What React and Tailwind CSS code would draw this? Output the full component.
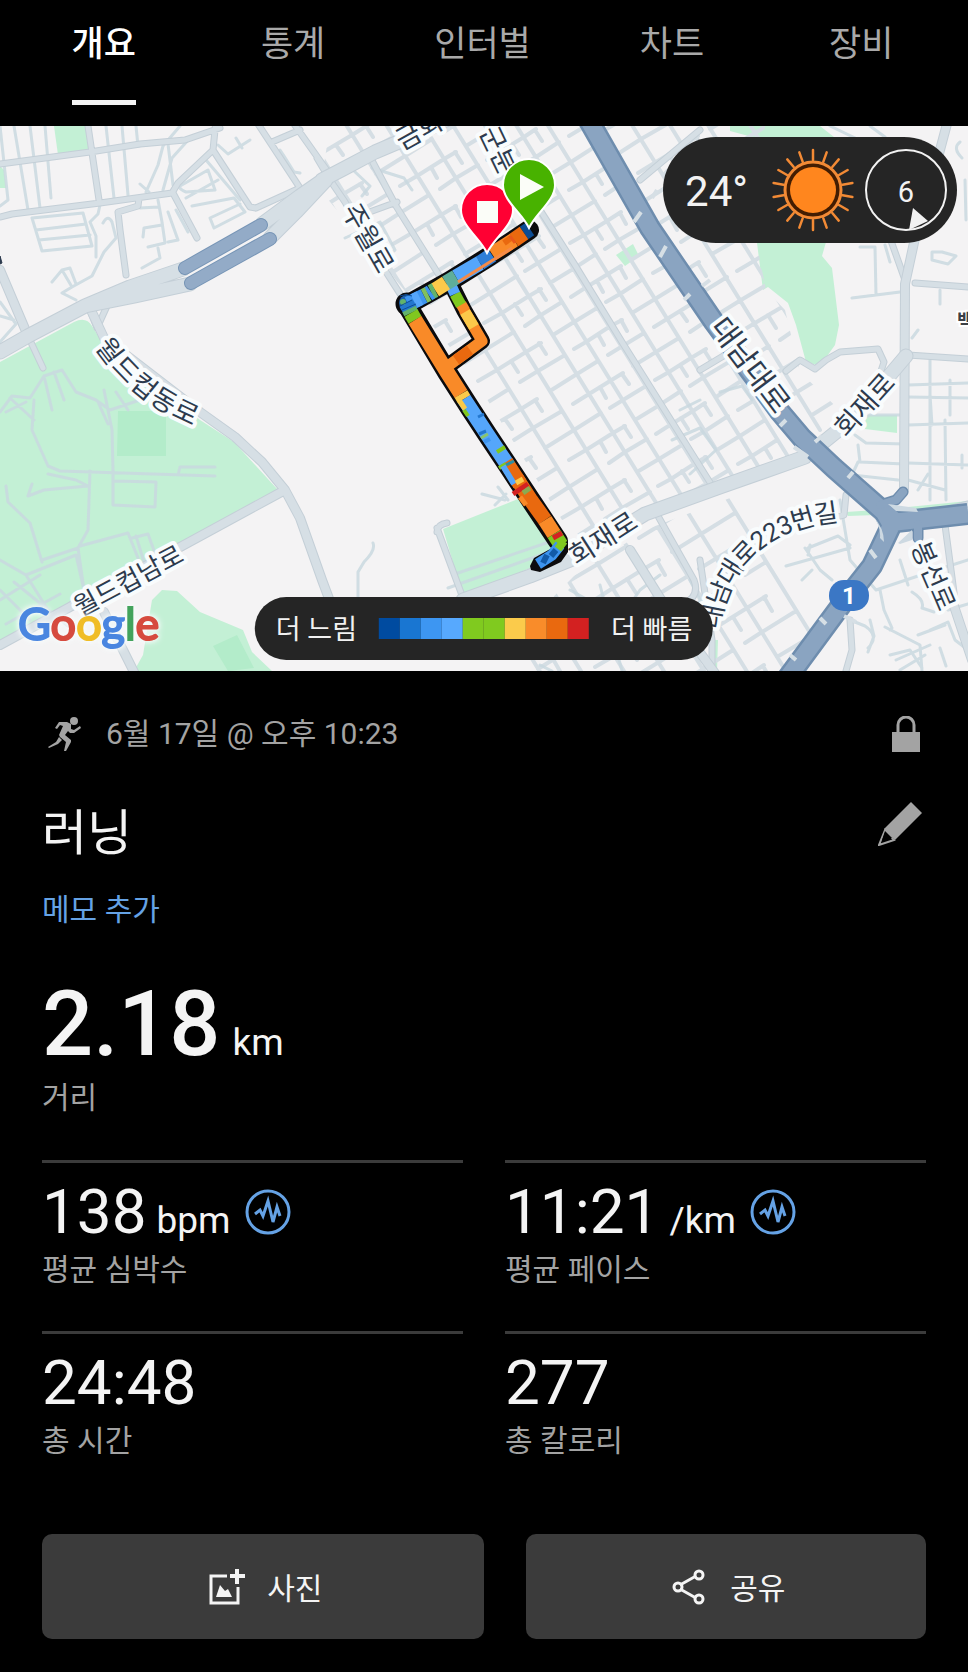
import React from "react";

const FONT = "font-['Roboto','Noto_Sans_CJK_KR',sans-serif]";

/* ---------- map geometry ---------- */

const ORIGIN = [540, 215];
const ALONG = [0.525, 0.851];
const ACROSS = [0.851, -0.525];

const at = (t, n) => [
  Math.round(ORIGIN[0] + t * ALONG[0] + n * ACROSS[0]),
  Math.round(ORIGIN[1] + t * ALONG[1] + n * ACROSS[1]),
];
const seg = (t1, n1, t2, n2) => {
  const [x1, y1] = at(t1, n1);
  const [x2, y2] = at(t2, n2);
  return `M${x1} ${y1}L${x2} ${y2}`;
};

function streets(avenues, tFrom, tTo, pitch) {
  const out = [];
  avenues.forEach((n) => out.push(seg(tFrom, n, tTo, n)));
  let row = 0;
  for (let t = tFrom; t < tTo; t += pitch) {
    for (let k = 0; k < avenues.length - 1; k++) {
      const a = avenues[k];
      const b = avenues[k + 1];
      const kind = (row * 5 + k * 3) % 7;
      if (kind < 4) out.push(seg(t, a, t, b));
      else if (kind === 4) out.push(seg(t, a, t, a + (b - a) * 0.55));
      else out.push(seg(t, b, t, b - (b - a) * 0.6));
      if (kind % 3 === 1) {
        const m = a + (b - a) * 0.5;
        out.push(seg(t, m, t + pitch * 0.55, m));
      }
    }
    row += 1;
  }
  return out.join("");
}

const ZONE_WEST = "M320 190L330 126L590 126L700 320L780 430L806 458L720 488L645 515L590 545L562 520L470 372L400 285Z";
const ZONE_EAST = "M604 126L765 126L757 245L766 290L785 310L800 372L850 420L812 440L712 318Z";
const ZONE_SOUTH = "M575 575L650 528L810 468L866 515L880 535L835 600L780 671L480 671Z";

const WEST_STREETS = streets([-190, -155, -118, -84, -52, -27, 0, 27, 54, 84], -190, 420, 23);
const EAST_STREETS = streets([92, 126, 158, 190, 226, 262], -200, 330, 27);
const SOUTH_STREETS = streets([-240, -205, -168, -134, -100, -64, -30, 10], 240, 560, 29);

const WIDE_ROADS = [
  "M0 352L28 336L85 306L130 287L183 269",
  "M85 306L135 296L190 284",
  "M262 224L300 196L326 178",
  "M270 238L296 212L326 180",
  "M322 180L345 168L375 152L420 133L470 108",
  "M463 600L530 576L570 560L645 514L720 487L805 457",
  "M820 445L846 424L884 382L906 356",
];
const MID_ROADS = [
  "M948 120L932 180L915 238L905 284L904 490",
  "M952 600L972 660",
  "M0 645L285 490",
  "M90 308L104 338L200 412L235 437L262 462L285 490L300 518L322 580L334 612",
  "M104 612L136 676",
  "M0 270L28 336",
  "M630 550L660 598L720 680",
];
const SMALL_ROADS = [
  "M0 217L12 214L100 203L172 193L178 183L213 150L216 120",
  "M213 150L250 207L256 208",
  "M256 208L300 188",
  "M0 164L90 152L140 144L185 140L220 128",
  "M88 126L99 200",
  "M258 124L300 188",
  "M294 124L328 172",
  "M272 142L300 130",
  "M173 193L197 238",
  "M139 198L138 206L118 212L120 230L126 275",
  "M317 158L330 180L345 202L372 250L404 300",
  "M28 336L43 368",
  "M368 153L396 206L452 296",
  "M540 210L575 265L622 342L716 492",
  "M364 214L397 202",
  "M915 283L968 287M908 355L968 359",
  "M786 371L800 360L815 369L826 360L840 352L878 349L884 362L880 374",
  "M890 238L905 280",
  "M437 528L463 598M437 532Q438 524 447 523",
  "M658 516L694 580Q700 596 684 604L664 620",
  "M700 560L712 640L712 671",
  "M850 620L852 650L846 671M905 520L968 504",
  "M832 518L844 515L846 495M945 525L955 600",
  "M90 310L97 328L107 306",
  "M640 180L700 130M700 370L730 352",
];
const LANES = [
  "M0 126L8 200L0 206M14 126L28 210M30 126L40 208M45 126L51 198M106 126L114 198M122 126L128 195M136 126L138 146L190 139",
  "M180 126L163 146L158 165L146 192M168 144L173 185M140 184L149 192M220 127L190 138L172 158L163 190",
  "M32 218L83 213L92 246L42 251L32 218M36 230L86 224M39 240L90 235",
  "M100 205L98 214L90 222L96 236L96 257M103 223Q108 214 112 222L116 238L104 252L92 276L72 287L62 270L52 282M62 270L70 268L76 284",
  "M72 287L62 293L76 300M158 200L162 222L165 243L148 247M162 225L144 228L143 237M158 248L160 258L142 268M140 208L158 207",
  "M180 186L208 170L215 190L186 192Q176 188 180 182M186 198L218 180M192 206L234 198L245 212L214 228L210 218L240 204M206 160L240 200M168 212L178 240L168 242M176 210L188 232",
  "M218 145L228 154L250 140M236 138L242 148M275 152L292 176M280 150L284 156L294 172L300 173",
  "M0 302L16 324L0 342M0 316L14 320",
  "M0 412L12 396L30 398L44 376L62 370L76 392L96 400L110 410L140 400M44 376L52 410M54 372L64 400M34 400L32 430L48 466L60 471L215 476M104 390L112 430L113 470M113 470L113 505L155 507L156 482L114 481M90 471L88 530L78 548L42 560M48 474L76 480L88 486L44 490L28 496L32 484M178 475L180 467L215 467",
  "M6 486L8 502L30 523L42 562M80 546L128 533L138 558M132 538L148 534L156 556M136 536L144 562M0 560L26 575L48 610M26 575L76 555L84 590L60 612M14 582L68 626M0 590L30 620M6 624L60 594M20 634L72 604M0 600L40 575M78 548L84 590",
  "M6 412L26 402M98 402L108 424M116 392L128 410M10 398L34 420",
  "M373 543Q376 550 364 562L358 572L358 597M455 574L555 540M448 588L560 548M482 494L505 500M495 505L506 494M498 487L508 500",
  "M353 170L370 186L362 196M372 168L404 178L412 190M345 238L380 222L395 250L380 262",
  "M908 385L968 383M908 397L968 398M930 360L930 500M930 395L932 425M950 380L950 415M908 425L968 423M908 463L968 465M908 480L945 490M945 420L946 500M962 455L962 468M918 490L928 474",
  "M855 435L866 443L905 444M858 445L860 462L904 464M858 462L852 475L898 480M860 420L870 415L900 415",
  "M830 126L880 150L918 140M870 126L885 137M960 142Q952 148 962 158M965 180L966 220M860 247L875 247L876 295M852 298L900 292M942 252L956 256L948 264L932 260L932 252L942 252M885 245L890 262M940 290L940 304M918 330L912 338",
  "M840 500L850 560L876 590L930 572L968 560M808 548L838 536L850 545M805 548L820 570L832 580M786 566L850 548M802 580L812 570M810 545L808 555M900 560L908 585M880 590L884 610L892 628L890 630M885 627L920 645L922 671",
  "M870 620L874 636L868 652M850 620L865 626Q880 636 868 648M912 592Q925 600 922 608L934 612M930 630L948 622L955 640L968 650M918 635L945 625M890 655L910 650L922 668M896 660L930 645M900 670L925 655M940 648L946 666M948 610L968 604",
  "M672 440L700 428L716 450L690 474M720 392L742 386L752 400M680 410L700 400",
  "M660 575L640 590L625 612M690 580L700 600L688 630M600 585L622 671M570 590L588 600M540 665L552 671",
];

const BLUE_ROADS = [
  "M584 112L650 228L714 322L780 412L802 438L834 468L884 512L892 526",
  "M884 512L896 522L968 514",
  "M892 524L872 566L842 604L786 680",
];
const BLUE_STUBS = "M880 505L896 500L903 492M918 524L918 538";
const TUNNELS = "M185 268L261 225M191 283L270 239";

/* colour and start/end of each coloured stretch of the run */
const ROUTE_LOOP = "M450 282L464 310L482 341L448 366";
const ROUTE_MAIN = "M529 230L490 256L450 281L407 305L447 372L470 408L487 434L507 464L530 499L558 541";
const ROUTE_TAIL = "M560 545L552 555L538 564";
const LOOP_PARTS = [
  ["#f98a28", "M464 310L482 341L448 366"],
  ["#e9690f", "M470 350L456 360"],
  ["#fbc94a", "M465 312L474 327"],
  ["#f98a28", "M461 304L465 311"],
  ["#80c81f", "M455 294L461 305"],
  ["#55a6fb", "M450 283L455 294"],
];
const MAIN_PARTS = [
  ["#0b4c94", "M530 229L524 233"],
  ["#e9690f", "M524 233L514 240"],
  ["#f98a28", "M514 240L492 254"],
  ["#2f7fd8", "M492 255L480 263"],
  ["#55a6fb", "M480 263L456 277"],
  ["#5fae9a", "M456 277L446 283"],
  ["#fbc94a", "M446 283L435 290"],
  ["#62b36c", "M435 290L431 292"],
  ["#3d94ef", "M431 292L428 294"],
  ["#80c060", "M428 294L424 296"],
  ["#3d94ef", "M424 296L408 304"],
  ["#55a6fb", "M420 298L414 301"],
  ["#2377cf", "M406 303L410 310"],
  ["#62b36c", "M409 309L411 313"],
  ["#80c81f", "M411 313L415 320"],
  ["#f98a28", "M415 320L447 372L461 394"],
  ["#fbc94a", "M461 394L464 399"],
  ["#55a6fb", "M464 399L487 434L507 464"],
  ["#f98a28", "M516 478L520 484"],
  ["#e9690f", "M506 462L530 499L545 520"],
  ["#f98a28", "M545 520L554 534"],
  ["#80c81f", "M554 534L561 545"],
];
const MAIN_FLECKS = [
  ["#e9690f", 6, "M518 233L504 243"],
  ["#e8571a", 3, "M515 243L510 236"],
  ["#f58b48", 3, "M512 248L458 282"],
  ["#80c81f", 4, "M464 410L468 416"],
  ["#fbc94a", 5, "M459 400L465 409"],
  ["#2377cf", 3, "M478 417L484 414M479 434L486 431"],
  ["#8ac46e", 3, "M481 438L488 434"],
  ["#3d94ef", 4, "M484 442L490 439"],
  ["#80c81f", 4, "M497 452L505 447M499 468L506 464"],
  ["#2e8fa0", 3, "M506 465L514 461"],
  ["#55a6fb", 6, "M503 466L514 484"],
  ["#fbc94a", 5, "M516 483L523 479"],
  ["#d32222", 5, "M513 494L528 484"],
  ["#8aab52", 5, "M523 493L530 488"],
  ["#f98a28", 5, "M520 497L526 505"],
  ["#d32222", 5, "M553 538L562 533"],
];

const PIN = "M0 42C-7 27-26 15-26 -1A26 26 0 0 1 26 -1C26 15 7 27 0 42Z";

function StreetLabel({ id, d, children, size = 27 }) {
  return (
    <>
      <path id={id} d={d} fill="none" />
      <text
        fontSize={size}
        fill="#2d3b4e"
        stroke="#f9fcfd"
        strokeWidth="8"
        strokeLinejoin="round"
        paintOrder="stroke"
        dy="9"
      >
        <textPath href={`#${id}`}>{children}</textPath>
      </text>
    </>
  );
}

function Roads({ paths, width }) {
  const d = paths.join("");
  return (
    <g fill="none" strokeLinecap="round" strokeLinejoin="round">
      <path d={d} stroke="#c4cfd7" strokeWidth={width + 2} />
      <path d={d} stroke="#d6dfe5" strokeWidth={width} />
    </g>
  );
}

function RouteMap() {
  return (
    <svg
      viewBox="0 126 968 545"
      preserveAspectRatio="xMidYMid slice"
      className={`block h-auto w-full ${FONT}`}
      role="img"
      aria-label="러닝 경로 지도"
    >
      <defs>
        <clipPath id="zone-west"><path d={ZONE_WEST} /></clipPath>
        <clipPath id="zone-east"><path d={ZONE_EAST} /></clipPath>
        <clipPath id="zone-south"><path d={ZONE_SOUTH} /></clipPath>
      </defs>
      <rect x="0" y="126" width="968" height="545" fill="#f4f3f4" />

      <g fill="#c3f0d5">
        <path d="M0 362L74 322Q86 316 92 326L104 345L200 420L234 442L278 490L0 640Z" />
        <path d="M54 126L86 126L90 152L58 155Z" />
        <path d="M0 166L4 170L6 188L0 188Z" />
        <path d="M152 600L162 590L177 591L200 612L243 630L252 652L272 671L134 671L143 655Z" />
        <path d="M443 529L518 499L556 545L535 566L463 596Z" />
        <path d="M730 126L820 126L834 137L826 242L822 256L832 268L839 325L835 345L820 366L806 362L796 325L788 303L768 287L763 290L757 243L756 138L730 131Z" />
        <path d="M616 255L633 244L639 256L625 266Z" />
        <path d="M866 415L897 415L897 433L865 429Z" />
        <path d="M711 640L718 640L717 671L710 671Z" />
        <path d="M846 512L876 510L876 515L848 516ZM908 507L968 501L968 505L908 510Z" />
      </g>
      <path d="M118 411H166V456H117ZM213 646L237 635L254 668L228 671Z" fill="#b3ecca" />

      <g fill="none" stroke="#d5dee4" strokeWidth="4" strokeLinecap="round">
        <path d={WEST_STREETS} clipPath="url(#zone-west)" />
        <path d={EAST_STREETS} clipPath="url(#zone-east)" />
        <path d={SOUTH_STREETS} clipPath="url(#zone-south)" />
      </g>
      <path
        d={LANES.join("")}
        fill="none"
        stroke="#c9d8df"
        strokeWidth="3"
        strokeLinecap="round"
        strokeLinejoin="round"
        opacity="0.85"
      />
      <Roads paths={SMALL_ROADS} width={5} />
      <Roads paths={MID_ROADS} width={8} />
      <Roads paths={WIDE_ROADS} width={13} />

      <g fill="none" strokeLinecap="round">
        <path d={TUNNELS} stroke="#7795b6" strokeWidth="14" />
        <path d={TUNNELS} stroke="#93abc7" strokeWidth="12" />
      </g>
      <g fill="none" strokeLinejoin="round">
        <path d={BLUE_ROADS.join("")} stroke="#6e8dae" strokeWidth="22" />
        <path d={BLUE_STUBS} stroke="#6e8dae" strokeWidth="11" strokeLinecap="round" />
        <path d={BLUE_ROADS.join("")} stroke="#8aa4c1" strokeWidth="17" />
        <path d={BLUE_STUBS} stroke="#8aa4c1" strokeWidth="8" strokeLinecap="round" />
      </g>
      <path d="M888 504L916 508L918 512L896 511ZM898 543L912 530L912 540L900 544ZM873 516Q884 528 884 542L880 538Q881 526 873 516Z" fill="#cdd9e2" />
      <path
        d="M652 198L657 190M634 222L641 212M663 176L668 170M702 286L710 280M660 257L666 246M684 300L690 294M780 426L786 420M794 447L808 457M815 442L822 436M848 478L853 472M870 550L876 558M820 618L826 624M790 655L796 660M844 616L856 622"
        stroke="#d6dfe5"
        strokeWidth="4"
      />

      <StreetLabel id="label-geumhwa" d="M398 143L450 114">금화</StreetLabel>
      <StreetLabel id="label-gunbun" d="M487 128L528 213">군분</StreetLabel>
      <StreetLabel id="label-juwol" d="M349 206L400 295">주월로</StreetLabel>
      <StreetLabel id="label-daenam" d="M716 322L798 431" size={30}>대남대로</StreetLabel>
      <StreetLabel id="label-wd-dong" d="M102 341Q120 368 145 388T215 425">월드컵동로</StreetLabel>
      <StreetLabel id="label-wd-nam" d="M76 609L220 532" size={26}>월드컵남로</StreetLabel>
      <StreetLabel id="label-hoejae-a" d="M572 559L660 503">회재로</StreetLabel>
      <StreetLabel id="label-hoejae-b" d="M840 433L921 344">회재로</StreetLabel>
      <StreetLabel id="label-223" d="M711 628C716 585 745 515 850 512" size={26}>대남대로223번길</StreetLabel>
      <StreetLabel id="label-bongseon" d="M919 543L965 650" size={26}>봉선로</StreetLabel>
      <text x="957" y="328" fontSize="19" fontWeight="700" fill="#3b4046" stroke="#fff" strokeWidth="4" paintOrder="stroke">백</text>
      <path d="M0 256L2 263L0 264Z" fill="#2d3b4e" stroke="#2d3b4e" />

      <rect x="829" y="580" width="40" height="31" rx="15" fill="#3b77c5" />
      <text x="849" y="604" fontSize="24" fontWeight="700" fill="#fff" textAnchor="middle">1</text>

      <g fill="none" strokeLinejoin="round" strokeLinecap="round" stroke="#0b0b0d">
        <path d={ROUTE_LOOP} strokeWidth="16" />
        <path d={ROUTE_MAIN} strokeWidth="20" />
        <circle cx="407" cy="304" r="6" strokeWidth="11" />
      </g>
      <path d="M530 566L534 558L552 548L560 540L568 540L568 552L561 562L540 572L531 570Z" fill="#0b0b0d" />
      <g fill="none" strokeLinejoin="round">
        {LOOP_PARTS.map(([color, d]) => (
          <path key={d} d={d} stroke={color} strokeWidth="11" />
        ))}
        <circle cx="407" cy="303" r="8" fill="#1a5fab" />
        {MAIN_PARTS.map(([color, d]) => (
          <path key={d} d={d} stroke={color} strokeWidth="15" />
        ))}
        {MAIN_FLECKS.map(([color, width, d]) => (
          <path key={d} d={d} stroke={color} strokeWidth={width} />
        ))}
        <path d={ROUTE_TAIL} stroke="#3d94ef" strokeWidth="11" />
        <path d="M556 550L551 556M547 555L543 563" stroke="#125aa8" strokeWidth="6" />
        <path d="M564 541L558 549" stroke="#80c81f" strokeWidth="8" />
        <circle cx="403" cy="302" r="3" fill="#62b36c" />
        <path d="M400 296Q406 293 412 296M400 306L412 300M402 310L416 304" stroke="#0f4e97" strokeWidth="1" />
      </g>

      <g stroke="#fff" strokeWidth="2">
        <path d={PIN} transform="translate(487 211)" fill="#ff0033" />
        <path d={PIN} transform="translate(529 186)" fill="#48b200" />
      </g>
      <path d="M477 201H498V223H477ZM520 174L544 187L520 200Z" fill="#fbfdf8" />

      <text
        x="18"
        y="640"
        fontFamily="Lato"
        fontSize="45"
        strokeWidth="2"
        className="[filter:drop-shadow(0_0_2px_#f7fbfb)_drop-shadow(0_0_3px_#f7fbfb)]"
      >
        <tspan fill="#4a86e0" stroke="#4a86e0">G</tspan>
        <tspan fill="#d64b3f" stroke="#d64b3f">o</tspan>
        <tspan fill="#f0bd27" stroke="#f0bd27">o</tspan>
        <tspan fill="#4a86e0" stroke="#4a86e0">g</tspan>
        <tspan fill="#43a35c" stroke="#43a35c">l</tspan>
        <tspan fill="#d64b3f" stroke="#d64b3f">e</tspan>
      </text>
    </svg>
  );
}

/* ---------- icons ---------- */

const RAYS = Array.from({ length: 18 }, (_, i) => i * 20);

function SunIcon() {
  return (
    <svg viewBox="-42 -42 84 84" className="size-[84px]" aria-hidden="true">
      <g stroke="#f28a35" strokeWidth="2.500" strokeLinecap="round">
        {RAYS.map((a) => (
          <path key={a} d="M0 -30V-40" transform={`rotate(${a})`} />
        ))}
      </g>
      <circle r="28" fill="#431d02" stroke="#f28a35" strokeWidth="3" />
      <circle r="23" fill="#ff861e" />
    </svg>
  );
}

function WindDial() {
  return (
    <svg viewBox="-42 -42 84 84" className={`size-[84px] ${FONT}`} role="img" aria-label="풍속 6">
      <circle r="40" fill="none" stroke="#f2f2f2" strokeWidth="2" />
      <path d="M7 18L3 40L22 31Z" fill="#f2f2f2" />
      <text y="12" fontSize="29" fill="#f2f2f2" textAnchor="middle">6</text>
    </svg>
  );
}

function RunnerIcon() {
  return (
    <svg viewBox="0 0 34 36" className="h-9 w-[34px]" fill="#a3a3a3" aria-hidden="true">
      <circle cx="26" cy="5" r="4" />
      <path d="M11 6L19 6L23 8L23 13L26 14L32 10L33 12L26 17L22 17L20 15L17 19L23 24L23 26L18 35L16 35L18 26L12 21L11 19L15 10L12 9L9 13L7 12Z" />
      <path d="M11 21L14 24L10 28L1 32L0 31L8 26Z" />
    </svg>
  );
}

function LockIcon() {
  return (
    <svg viewBox="0 0 28 36" className="h-9 w-7" role="img" aria-label="비공개">
      <path d="M6 18V9A8 8 0 0 1 22 9V18" fill="none" stroke="#a3a3a3" strokeWidth="3" />
      <path d="M0 16H28V36H0Z" fill="#a3a3a3" />
    </svg>
  );
}

function PencilIcon() {
  return (
    <svg viewBox="0 0 44 44" className="size-11" aria-hidden="true">
      <path d="M33 0L44 11L17 38L6 27Z" fill="#a3a3a3" />
      <path d="M7 28L1 43L16 38Z" fill="none" stroke="#a3a3a3" strokeWidth="2" />
      <path d="M7 29L4 38L14 36Z" fill="#000" />
    </svg>
  );
}

function PulseIcon() {
  return (
    <svg viewBox="0 0 46 46" className="size-[46px]" fill="none" stroke="#65a2e5" aria-hidden="true">
      <circle cx="23" cy="23" r="21" strokeWidth="3" />
      <path d="M10 25L15 21L18 27L23 12L28 33L32 18L35 27" strokeWidth="3" strokeLinejoin="miter" />
    </svg>
  );
}

function PhotoIcon() {
  return (
    <svg viewBox="0 0 36 36" className="size-9" aria-hidden="true">
      <path d="M18 7H2V34H29V18" fill="none" stroke="#f4f4f4" strokeWidth="3" />
      <path d="M7 28L11 16L16 22L19 20L23 28Z" fill="#f4f4f4" />
      <path d="M28 0V15M21 7H36" stroke="#f4f4f4" strokeWidth="4" />
    </svg>
  );
}

function ShareIcon() {
  return (
    <svg viewBox="0 0 34 36" className="h-9 w-[34px]" fill="none" stroke="#f4f4f4" strokeWidth="3" aria-hidden="true">
      <path d="M8 16L24 7M8 20L24 29" />
      <circle cx="6" cy="18" r="4" />
      <circle cx="27" cy="6" r="4" />
      <circle cx="27" cy="30" r="4" />
    </svg>
  );
}

/* ---------- page ---------- */

const TABS = ["개요", "통계", "인터벌", "차트", "장비"];

function Tabs() {
  return (
    <nav className="grid h-[126px] grid-cols-5 pr-3 pl-[9px]">
      {TABS.map((tab, i) => (
        <button
          key={tab}
          type="button"
          aria-current={i === 0 ? "page" : undefined}
          className={
            i === 0
              ? "flex flex-col items-center pt-5 text-[35px] leading-[50px] font-medium text-white"
              : "flex flex-col items-center pt-5 text-[35px] leading-[50px] text-[#a9a9a9]"
          }
        >
          {tab}
          {i === 0 && <span className="mt-[30px] h-[5px] w-16 bg-[#f4f4f4]" />}
        </button>
      ))}
    </nav>
  );
}

const PACE_COLORS = [
  "bg-[#004ba0]",
  "bg-[#1976d2]",
  "bg-[#3d96f2]",
  "bg-[#57a9fe]",
  "bg-[#80ca1f]",
  "bg-[#80ca1f]",
  "bg-[#fbcb4b]",
  "bg-[#f98c2a]",
  "bg-[#e9690f]",
  "bg-[#d32121]",
];

function MapPanel() {
  return (
    <section className="relative">
      <RouteMap />
      <div className="absolute top-[11px] right-[11px] flex h-[106px] items-center rounded-full bg-[#252525] pr-[9px] pl-[22px] text-[#f2f2f2]">
        <span className="pt-1 text-[42px] leading-none">24°</span>
        <span className="ml-[23px]">
          <SunIcon />
        </span>
        <span className="ml-[9px]">
          <WindDial />
        </span>
      </div>
      <div className="absolute bottom-[11px] left-1/2 flex h-[63px] -translate-x-1/2 items-center gap-[22px] rounded-full bg-[#252525] px-[21px] text-[27px] leading-none whitespace-nowrap text-[#f2f2f2]">
        <span className="pt-1">더 느림</span>
        <span className="flex">
          {PACE_COLORS.map((color, i) => (
            <span key={i} className={`size-[21px] ${color}`} />
          ))}
        </span>
        <span className="pt-1">더 빠름</span>
      </div>
    </section>
  );
}

function Stat({ value, unit, label, pulse }) {
  return (
    <div className="border-t-[3px] border-[#3b3b3b] pt-[17px]">
      <div className="flex items-center gap-3.5">
        <div className="flex items-baseline gap-2.5">
          <span className="text-[62px] leading-[64px]">{value}</span>
          {unit && <span className="text-[37px] leading-[40px]">{unit}</span>}
        </div>
        {pulse && <PulseIcon />}
      </div>
      <div className="mt-1.5 text-[30px] leading-[40px] text-[#a3a3a3]">{label}</div>
    </div>
  );
}

export default function App() {
  return (
    <div className={`min-h-screen bg-black text-[#f4f4f4] ${FONT}`}>
      <Tabs />
      <MapPanel />
      <main className="px-[42px] pt-[43px] pb-[33px]">
        <div className="flex items-center text-[30px] leading-[40px] text-[#a3a3a3]">
          <span className="ml-1.5">
            <RunnerIcon />
          </span>
          <span className="ml-6 grow">6월 17일 @ 오후 10:23</span>
          <span className="mr-[6px]">
            <LockIcon />
          </span>
        </div>

        <div className="mt-12 flex items-start justify-between">
          <h1 className="pt-0.5 text-[49px] leading-[60px]">러닝</h1>
          <button type="button" aria-label="이름 편집" className="mr-1">
            <PencilIcon />
          </button>
        </div>

        <button type="button" className="mt-[26px] block text-[30px] leading-[40px] text-[#65a2e5]">
          메모 추가
        </button>

        <div className="mt-[50px] flex items-baseline gap-3">
          <span className="text-[90px] leading-[90px] font-medium">2.18</span>
          <span className="text-[37px] leading-[40px]">km</span>
        </div>
        <div className="mt-2 text-[30px] leading-[40px] text-[#a3a3a3]">거리</div>

        <div className="mt-[42px] grid grid-cols-2 gap-x-[42px] gap-y-[41px]">
          <Stat value="138" unit="bpm" label="평균 심박수" pulse />
          <Stat value="11:21" unit="/km" label="평균 페이스" pulse />
          <Stat value="24:48" label="총 시간" />
          <Stat value="277" label="총 칼로리" />
        </div>

        <div className="mt-[73px] flex gap-[42px] text-[30px]">
          <button
            type="button"
            className="flex h-[105px] flex-[442] items-center justify-center gap-[22px] rounded-[10px] bg-[#3b3b3b] pl-1.5"
          >
            <PhotoIcon />
            <span className="pt-1">사진</span>
          </button>
          <button
            type="button"
            className="flex h-[105px] flex-[400] items-center justify-center gap-6 rounded-[10px] bg-[#3b3b3b] pl-1.5"
          >
            <ShareIcon />
            <span className="pt-1">공유</span>
          </button>
        </div>
      </main>
    </div>
  );
}
